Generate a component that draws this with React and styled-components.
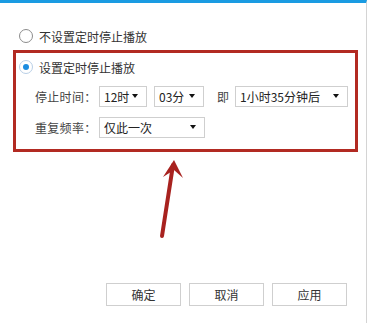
import React from 'react'
import styled, { createGlobalStyle } from 'styled-components'

const GlobalStyle = createGlobalStyle`
  html, body {
    margin: 0;
    padding: 0;
    background: #fff;
  }
  body {
    font-family: "Noto Sans CJK SC", "Noto Sans", sans-serif;
    color: #333;
  }
`

const Page = styled.div`
  position: relative;
  width: 367px;
  height: 323px;
  border-right: 1px solid #d4d4d4;
  border-top: 3px solid #1a9be2;
  box-sizing: border-box;
  display: flex;
  flex-direction: column;
`

const Option = styled.label`
  display: flex;
  align-items: center;
  gap: 6px;
  height: 20px;
  padding-left: ${({ indent }) => indent}px;
  margin-top: ${({ top }) => top || 0}px;
  font-size: 12px;
  color: #333;
`

const Radio = styled.span`
  width: 12px;
  height: 12px;
  border-radius: 50%;
  border: 1px solid ${({ checked }) => (checked ? '#b9cfe6' : '#8c8c8c')};
  background: #fff;
  display: flex;
  align-items: center;
  justify-content: center;
  flex-shrink: 0;

  &::after {
    content: '';
    width: 6px;
    height: 6px;
    border-radius: 50%;
    background: ${({ checked }) => (checked ? '#1a8ce0' : 'transparent')};
  }
`

const Highlight = styled.div`
  margin: 4px 0 0 13px;
  width: 345px;
  height: 102px;
  box-sizing: border-box;
  border: 3px solid #b22a22;
  padding-top: 4px;
  display: flex;
  flex-direction: column;
`

const Row = styled.div`
  display: flex;
  align-items: center;
  height: 22px;
  margin-top: ${({ top }) => top}px;
  padding-left: 19px;
  font-size: 12px;
  color: #444;
`

const Label = styled.span`
  width: 64px;
  flex-shrink: 0;
  letter-spacing: 0.3px;
`

const Select = styled.div`
  width: ${({ w }) => w}px;
  height: 21px;
  box-sizing: border-box;
  border: 1px solid #cfcfcf;
  margin-left: ${({ ml }) => ml || 0}px;
  display: flex;
  align-items: center;
  justify-content: space-between;
  padding: 0 8px 0 4px;
  font-size: 12px;
  color: #222;
  flex-shrink: 0;

  &::after {
    content: '';
    border-left: 3px solid transparent;
    border-right: 3px solid transparent;
    border-top: 4px solid #111;
  }
`

const Then = styled.span`
  margin-left: 13px;
  width: 18px;
`

const Footer = styled.div`
  margin-top: auto;
  margin-bottom: 17px;
  display: flex;
  justify-content: flex-end;
  gap: 8px;
  padding-right: 19px;
`

const Button = styled.div`
  width: 75px;
  height: 23px;
  box-sizing: border-box;
  border: 1px solid #cfcfcf;
  background: #fff;
  display: flex;
  align-items: center;
  justify-content: center;
  font-size: 12px;
  color: #333;
`

const Arrow = styled.svg`
  position: absolute;
  left: 150px;
  top: 150px;
`

export default function App() {
  return (
    <>
      <GlobalStyle />
      <Page>
        <Option indent={19} top={23}>
          <Radio />
          不设置定时停止播放
        </Option>
        <Highlight>
          <Option indent={3}>
            <Radio checked />
            设置定时停止播放
          </Option>
          <Row top={8}>
            <Label>停止时间：</Label>
            <Select w={48}>12时</Select>
            <Select w={50} ml={7}>03分</Select>
            <Then>即</Then>
            <Select w={113}>1小时35分钟后</Select>
          </Row>
          <Row top={9}>
            <Label>重复频率：</Label>
            <Select w={106}>仅此一次</Select>
          </Row>
        </Highlight>
        <Footer>
          <Button>确定</Button>
          <Button>取消</Button>
          <Button>应用</Button>
        </Footer>
        <Arrow width="40" height="90" viewBox="0 0 40 90">
          <line x1="12" y1="83" x2="23" y2="12" stroke="#a8221f" strokeWidth="4" strokeLinecap="round" />
          <polygon points="24,7 13,24 24,17 33,25" fill="#a8221f" />
        </Arrow>
      </Page>
    </>
  )
}
